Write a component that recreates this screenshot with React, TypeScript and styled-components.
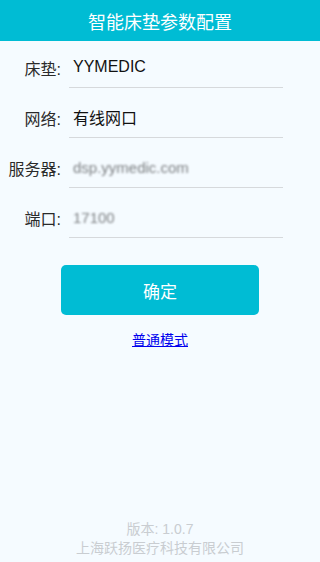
import React, { FC } from "react";
import styled, { createGlobalStyle } from "styled-components";

const GlobalStyle = createGlobalStyle`
  html, body {
    margin: 0;
    padding: 0;
    background: #f5fbff;
    font-family: "Liberation Sans", "Noto Sans CJK SC", sans-serif;
  }
`;

type FieldItem = {
  label: string;
  value: string;
  blurred?: boolean;
};

const fields: FieldItem[] = [
  { label: "床垫:", value: "YYMEDIC" },
  { label: "网络:", value: "有线网口" },
  { label: "服务器:", value: "dsp.yymedic.com", blurred: true },
  { label: "端口:", value: "17100", blurred: true },
];

const App: FC = () => {
  return (
    <>
      <GlobalStyle />
      <Page>
        <Header>智能床垫参数配置</Header>
        <Form>
          {fields.map((f) => (
            <Row key={f.label}>
              <Label>{f.label}</Label>
              <Field>
                <Value $blurred={f.blurred}>{f.value}</Value>
              </Field>
            </Row>
          ))}
        </Form>
        <SubmitBtn type="button">确定</SubmitBtn>
        <ModeLink href="#">普通模式</ModeLink>
        <Footer>
          <FooterLine>版本: 1.0.7</FooterLine>
          <FooterLine>上海跃扬医疗科技有限公司</FooterLine>
        </Footer>
      </Page>
    </>
  );
};

const Page = styled.div`
  width: 100%;
  min-height: 562px;
  display: flex;
  flex-direction: column;
  align-items: center;
  background: #f5fbff;
  overflow: hidden;
`;

const Header = styled.div`
  width: 100%;
  height: 41px;
  background: #00bcd4;
  color: #ffffff;
  font-size: 18px;
  display: flex;
  align-items: center;
  justify-content: center;
`;

const Form = styled.div`
  width: 100%;
  display: flex;
  flex-direction: column;
  gap: 9px;
  padding-top: 6px;
`;

const Row = styled.div`
  display: flex;
  align-items: center;
`;

const Label = styled.div`
  width: 61px;
  text-align: right;
  font-size: 16px;
  color: #2a2a2a;
`;

const Field = styled.div`
  margin-left: 8px;
  width: 210px;
  height: 40px;
  padding-left: 4px;
  border-bottom: 1px solid #d6d9dc;
  display: flex;
  align-items: center;
`;

const Value = styled.span<{ $blurred?: boolean }>`
  color: ${(p) => (p.$blurred ? "#7d8083" : "#111")};
  filter: ${(p) => (p.$blurred ? "blur(1px)" : "none")};
  font-size: ${(p) => (p.$blurred ? "15px" : "16px")};
`;

const SubmitBtn = styled.button`
  margin-top: 27px;
  width: 198px;
  height: 50px;
  border: none;
  border-radius: 5px;
  background: #00bcd4;
  color: #ffffff;
  font-family: "Liberation Sans", "Noto Sans CJK SC", sans-serif;
  font-size: 17px;
  cursor: pointer;
`;

const ModeLink = styled.a`
  margin-top: 14px;
  font-size: 14px;
  color: #0000ee;
  text-decoration: underline;
`;

const Footer = styled.div`
  margin-top: auto;
  padding-bottom: 4px;
  display: flex;
  flex-direction: column;
  align-items: center;
`;

const FooterLine = styled.div`
  font-size: 14px;
  line-height: 19px;
  color: #c9cdd1;
`;

export default App;
